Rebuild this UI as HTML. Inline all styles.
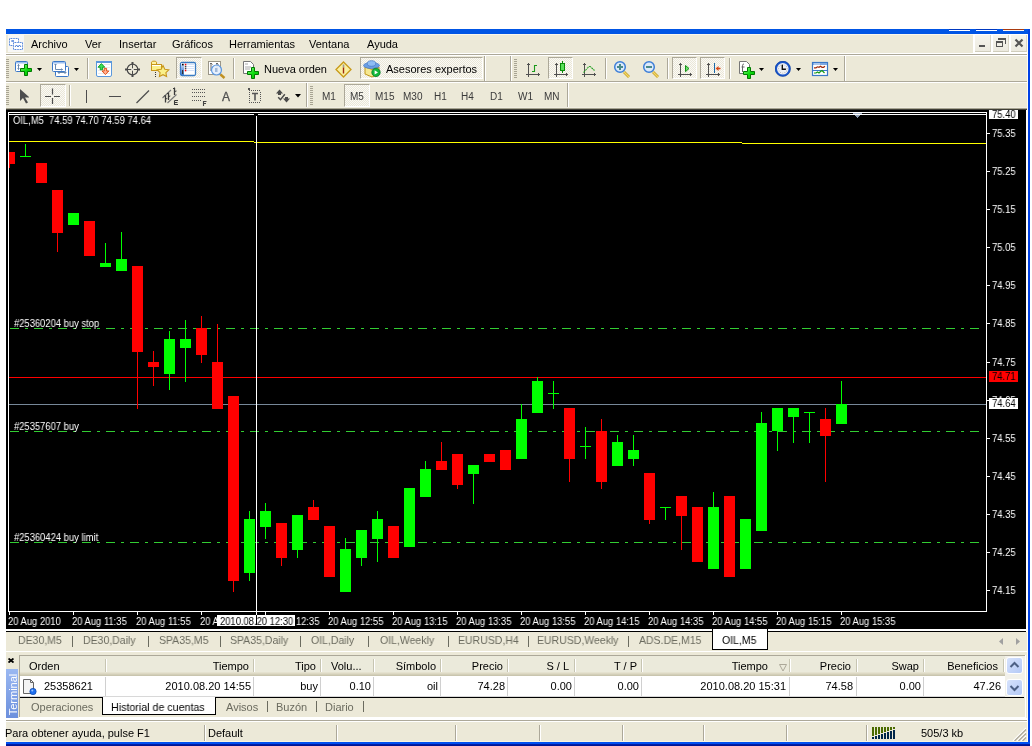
<!DOCTYPE html><html><head><meta charset="utf-8"><style>
html,body{margin:0;padding:0;background:#fff;width:1032px;height:746px;overflow:hidden;position:relative}
body *{position:absolute;box-sizing:border-box}
body{font-family:"Liberation Sans",sans-serif;font-size:11px;color:#000}
span{white-space:pre;line-height:1;will-change:transform}
.ct{color:#fff;font-size:10px;transform:scaleX(0.94);transform-origin:0 0}
</style></head><body>
<div style="left:6px;top:29px;width:1024px;height:5px;background:#0055E5;"></div>
<div style="left:949px;top:29px;width:21px;height:1px;background:#0038C0;"></div>
<div style="left:949px;top:30px;width:21px;height:1px;background:#fff;"></div>
<div style="left:976px;top:29px;width:21px;height:1px;background:#0038C0;"></div>
<div style="left:976px;top:30px;width:21px;height:1px;background:#fff;"></div>
<div style="left:1003px;top:29px;width:21px;height:1px;background:#A83A10;"></div>
<div style="left:1003px;top:30px;width:21px;height:1px;background:#FFF4EC;"></div>
<div style="left:1028px;top:29px;width:2px;height:717px;background:#0041E6;"></div>
<div style="left:1027px;top:34px;width:1px;height:708px;background:#FFFDF4;"></div>
<div style="left:6px;top:742px;width:1024px;height:4px;background:linear-gradient(#0050F0 0,#0050F0 50%,#0020B0 50%,#00128A 100%)"></div>
<div style="left:6px;top:34px;width:1021px;height:19px;background:#ECE9D8;"></div>
<div style="left:6px;top:34px;width:1021px;height:1px;background:#FAF7EC;"></div>
<div style="left:6px;top:53px;width:1021px;height:1px;background:#fff;"></div>
<div style="left:6px;top:54px;width:1021px;height:1px;background:#ACA899;"></div>
<div style="left:6px;top:55px;width:1021px;height:1px;background:#fff;"></div>
<div style="left:6px;top:56px;width:1021px;height:25px;background:#ECE9D8;"></div>
<div style="left:6px;top:81px;width:1021px;height:1px;background:#ACA899;"></div>
<div style="left:6px;top:82px;width:1021px;height:1px;background:#fff;"></div>
<div style="left:6px;top:83px;width:1021px;height:24px;background:#ECE9D8;"></div>
<div style="left:6px;top:107px;width:1021px;height:1px;background:#F1EEE2;"></div>
<div style="left:6px;top:108px;width:1021px;height:1px;background:#A8A592;"></div>
<div style="left:6px;top:109px;width:1021px;height:1px;background:#3E3D36;"></div>
<div style="left:8px;top:35px;width:16px;height:17px;background:#F7F7F5;"></div>
<svg style="left:8px;top:35px" width="16" height="17" viewBox="0 0 16 17"><rect x="1.5" y="3.5" width="9" height="7" fill="#fff" stroke="#4A7FD8" stroke-dasharray="1 0.6"/><rect x="5.5" y="7.5" width="9" height="7" fill="#fff" stroke="#4A7FD8" stroke-dasharray="1 0.6"/><path d="M7 12l1.5-2 1.5 2 1.5-2 1.5 2" stroke="#4A7FD8" fill="none"/><path d="M3 6h3M5 5v2" stroke="#4A7FD8" fill="none"/></svg>
<span style="left:31px;top:39px;">Archivo</span>
<span style="left:85px;top:39px;">Ver</span>
<span style="left:119px;top:39px;">Insertar</span>
<span style="left:172px;top:39px;">Gráficos</span>
<span style="left:229px;top:39px;">Herramientas</span>
<span style="left:309px;top:39px;">Ventana</span>
<span style="left:367px;top:39px;">Ayuda</span>
<div style="left:973px;top:34px;width:54px;height:19px;background:#FFFFFF;"></div>
<div style="left:975px;top:35px;width:16px;height:17px;background:linear-gradient(#F6F5EE,#ECEADF);border-right:1px solid #DAD7C8;border-bottom:1px solid #D0CDBC"></div>
<div style="left:993px;top:35px;width:16px;height:17px;background:linear-gradient(#F6F5EE,#ECEADF);border-right:1px solid #DAD7C8;border-bottom:1px solid #D0CDBC"></div>
<div style="left:1011px;top:35px;width:16px;height:17px;background:linear-gradient(#F6F5EE,#ECEADF);border-right:1px solid #DAD7C8;border-bottom:1px solid #D0CDBC"></div>
<div style="left:979px;top:45px;width:6px;height:2px;background:#555;"></div>
<svg style="left:993px;top:35px" width="16" height="16"><rect x="3.5" y="7.5" width="6" height="4" fill="none" stroke="#555"/><rect x="3" y="6" width="7" height="2" fill="#555"/><path d="M6 3h7v6h-1V4H6z" fill="#555"/><rect x="5" y="3" width="8" height="2" fill="#555"/></svg>
<svg style="left:1011px;top:35px" width="16" height="16"><path d="M4.5 4.5l7 7M11.5 4.5l-7 7" stroke="#555" stroke-width="2.2"/></svg>
<svg style="left:12px;top:57px" width="26" height="24" viewBox="0 0 26 24"><rect x="3.5" y="4.5" width="12" height="10" rx="1" fill="#fff" stroke="#3B78C8"/><rect x="4" y="5" width="11" height="1.5" fill="#9CC0F0"/><path d="M6.5 7.5v5M5.5 8.5l1-1 1 1M5.5 11.5l1 1 1-1" stroke="#6A8AB0" fill="none"/><defs><linearGradient id="pg87" x1="0" y1="0" x2="1" y2="1"><stop offset="0" stop-color="#9CF59C"/><stop offset="0.5" stop-color="#10E010"/><stop offset="1" stop-color="#00B000"/></linearGradient></defs><path d="M12.5 7.5h3v4h4v3h-4v4h-3v-4h-4v-3h4z" fill="url(#pg87)" stroke="#007A00" stroke-width="1"/></svg>
<svg style="left:37px;top:68px" width="5" height="3" viewBox="0 0 5 3"><path d="M0 0h5L2.5 3z" fill="#000"/></svg>
<svg style="left:50px;top:57px" width="24" height="24" viewBox="0 0 24 24"><rect x="5.5" y="9.5" width="13" height="10" rx="1" fill="#fff" stroke="#3B78C8"/><path d="M8 15.5h8M8 15.5l1.5-1.5M8 15.5l1.5 1.5M16 15.5l-1.5-1.5M16 15.5l-1.5 1.5" stroke="#6A8AB0" fill="none"/><rect x="2.5" y="4.5" width="13" height="10" rx="1" fill="#fff" stroke="#3B78C8"/><rect x="3" y="5" width="12" height="1.5" fill="#9CC0F0"/><path d="M5.5 7v5.5h7M4.5 8l1-1 1 1M11.5 11.5l1 1-1 1" stroke="#6A8AB0" fill="none"/></svg>
<svg style="left:74px;top:68px" width="5" height="3" viewBox="0 0 5 3"><path d="M0 0h5L2.5 3z" fill="#000"/></svg>
<div style="left:87px;top:58px;width:1px;height:21px;background:#ACA899;"></div>
<div style="left:88px;top:58px;width:1px;height:21px;background:#fff;"></div>
<svg style="left:95px;top:60px" width="18" height="18" viewBox="0 0 18 18"><rect x="1.5" y="1.5" width="15" height="15" rx="1.5" fill="#fff" stroke="#5A98DC"/><rect x="1" y="1" width="16" height="2" fill="#5A98DC"/><path d="M3 4.5h12M3 7.5h12M3 10.5h12M3 13.5h12" stroke="#EAEAEA"/><path d="M6.4 3.6l3.4 3.6H7.6v2.6H5.2V7.2H3z" fill="#3AE05A" stroke="#0A9A1A" stroke-width="0.9"/><path d="M10.4 14.6l3.4-3.6h-2.2V8.4H9.2V11H7z" fill="#FFB090" stroke="#E0460A" stroke-width="0.9"/></svg>
<svg style="left:124px;top:61px" width="17" height="17" viewBox="0 0 17 17"><circle cx="8.5" cy="8.5" r="5.3" fill="none" stroke="#4A4A4A" stroke-width="1.2"/><path d="M8.5 1v15M1 8.5h15" stroke="#4A4A4A" stroke-width="1"/><path d="M8.5 1v3M8.5 13v3M1 8.5h3M13 8.5h3" stroke="#4A4A4A" stroke-width="2"/><circle cx="8.5" cy="8.5" r="1.2" fill="#F0EEE4"/></svg>
<svg style="left:150px;top:60px" width="20" height="19" viewBox="0 0 20 19"><path d="M1.5 4V2.2l1-1h3l1 1V4" fill="#FFF3A0" stroke="#C8961A"/><rect x="1.5" y="4.5" width="10" height="6" fill="#FBF08A" stroke="#C8961A"/><path d="M2 5.5h9" stroke="#fff"/><path d="M5.5 12v1M5.5 14v1M5.5 16v1" stroke="#333"/><path d="M13 5.6l1.8 3.6 4 .6-2.9 2.8.7 4L13 14.7l-3.6 1.9.7-4-2.9-2.8 4-.6z" fill="#FAF08A" stroke="#C8961A" stroke-width="1.1"/></svg>
<div style="left:176px;top:57px;width:26px;height:22px;border:1px solid;border-color:#ACA899 #fff #fff #ACA899;background-color:#FBFAF6;background-image:linear-gradient(45deg,#EAE7D8 25%,transparent 25%,transparent 75%,#EAE7D8 75%),linear-gradient(45deg,#EAE7D8 25%,transparent 25%,transparent 75%,#EAE7D8 75%);background-size:2px 2px;background-position:0 0,1px 1px"></div>
<svg style="left:179px;top:61px" width="18" height="16" viewBox="0 0 18 16"><defs><linearGradient id="dwg" x1="0" y1="0" x2="0" y2="1"><stop offset="0" stop-color="#E8F0FC"/><stop offset="0.5" stop-color="#7FA8E8"/><stop offset="1" stop-color="#3A78C8"/></linearGradient></defs><rect x="1.5" y="1.5" width="15" height="13" rx="1.5" fill="#fff" stroke="#3A7CC4" stroke-width="1.3"/><rect x="2" y="2" width="3" height="12" fill="url(#dwg)"/><rect x="3" y="2.8" width="1.6" height="1.6" fill="#000"/><rect x="3" y="9" width="1.2" height="4" fill="#333"/><path d="M7 3.5h8M7 5.5h8M7 7.5h8M7 9.5h8" stroke="#D4E2F8"/><rect x="5.8" y="2.8" width="1.5" height="1.5" fill="#F00"/><rect x="5.8" y="4.8" width="1.5" height="1.5" fill="#444"/><rect x="5.8" y="6.8" width="1.5" height="1.5" fill="#444"/><rect x="5.8" y="8.8" width="1.5" height="1.5" fill="#F00"/></svg>
<svg style="left:207px;top:60px" width="20" height="20" viewBox="0 0 20 20"><rect x="1.5" y="1.5" width="12" height="13" fill="#fff" stroke="#9A9688"/><path d="M4 3v8M3 4l1-1M4 3l1.5 1.5M10 3v5M9 4l1-1 1.5 1.5" stroke="#666" fill="none"/><path d="M13.5 14.5l4 3.5" stroke="#C09020" stroke-width="2.4"/><circle cx="9.5" cy="10" r="5" fill="#E4EEFC" fill-opacity="0.9" stroke="#5D98E0" stroke-width="1.2"/><rect x="8" y="8" width="2.5" height="4" fill="#9FB8DA"/></svg>
<div style="left:233px;top:58px;width:1px;height:21px;background:#ACA899;"></div>
<div style="left:234px;top:58px;width:1px;height:21px;background:#fff;"></div>
<svg style="left:242px;top:60px" width="20" height="20" viewBox="0 0 20 20"><path d="M1.5 1.5h7l3 3v9h-10z" fill="#fff" stroke="#777"/><path d="M3 4h3M3 7h6M3 9h5" stroke="#AAA"/><defs><linearGradient id="pg57" x1="0" y1="0" x2="1" y2="1"><stop offset="0" stop-color="#9CF59C"/><stop offset="0.5" stop-color="#10E010"/><stop offset="1" stop-color="#00B000"/></linearGradient></defs><path d="M9.5 7.5h3v4h4v3h-4v4h-3v-4h-4v-3h4z" fill="url(#pg57)" stroke="#007A00" stroke-width="1"/></svg>
<span style="left:264px;top:64px;">Nueva orden</span>
<svg style="left:335px;top:61px" width="18" height="17" viewBox="0 0 18 17"><path d="M8.5 1L16 8.5 8.5 16 1 8.5z" fill="#FAF0A0" stroke="#C89A1A" stroke-width="1.3"/><path d="M8.5 3.5v3" stroke="#9A9A9A" stroke-width="1.6"/><path d="M8.5 6.5v6" stroke="#A02A10" stroke-width="1.4"/></svg>
<div style="left:360px;top:57px;width:123px;height:22px;border:1px solid;border-color:#ACA899 #fff #fff #ACA899;background-color:#FBFAF6;background-image:linear-gradient(45deg,#EAE7D8 25%,transparent 25%,transparent 75%,#EAE7D8 75%),linear-gradient(45deg,#EAE7D8 25%,transparent 25%,transparent 75%,#EAE7D8 75%);background-size:2px 2px;background-position:0 0,1px 1px"></div>
<svg style="left:362px;top:59px" width="20" height="20" viewBox="0 0 20 20"><path d="M3 8l7 2.5 7-2.5v7l-7 3-7-3z" fill="#F6E890" stroke="#C0961A"/><ellipse cx="9.5" cy="6.5" rx="8" ry="3" fill="#6A9EE4" stroke="#4A7EC8" stroke-width="0.8"/><ellipse cx="9.5" cy="4.5" rx="4.2" ry="2.8" fill="#8EBCF4" stroke="#4A7EC8" stroke-width="0.8"/><circle cx="14" cy="13.4" r="4.2" fill="#12B83A" stroke="#0A7A2A" stroke-width="0.8"/><path d="M12.6 11.2v4.4l3.4-2.2z" fill="#fff"/></svg>
<span style="left:386px;top:64px;">Asesores expertos</span>
<div style="left:484px;top:56px;width:1px;height:25px;background:#ACA899;"></div>
<div style="left:485px;top:56px;width:1px;height:25px;background:#fff;"></div>
<div style="left:510px;top:56px;width:1px;height:25px;background:#ACA899;"></div>
<div style="left:511px;top:56px;width:1px;height:25px;background:#fff;"></div>
<div style="left:514px;top:59px;width:3px;height:1px;background:#A8A493;"></div>
<div style="left:514px;top:61px;width:3px;height:1px;background:#A8A493;"></div>
<div style="left:514px;top:63px;width:3px;height:1px;background:#A8A493;"></div>
<div style="left:514px;top:65px;width:3px;height:1px;background:#A8A493;"></div>
<div style="left:514px;top:67px;width:3px;height:1px;background:#A8A493;"></div>
<div style="left:514px;top:69px;width:3px;height:1px;background:#A8A493;"></div>
<div style="left:514px;top:71px;width:3px;height:1px;background:#A8A493;"></div>
<div style="left:514px;top:73px;width:3px;height:1px;background:#A8A493;"></div>
<div style="left:514px;top:75px;width:3px;height:1px;background:#A8A493;"></div>
<div style="left:514px;top:77px;width:3px;height:1px;background:#A8A493;"></div>
<div style="left:528px;top:63px;width:1px;height:14px;background:#505050;"></div>
<div style="left:526px;top:74px;width:14px;height:1px;background:#505050;"></div>
<div style="left:527px;top:64px;width:1px;height:1px;background:#505050;"></div>
<div style="left:529px;top:64px;width:1px;height:1px;background:#505050;"></div>
<div style="left:538px;top:73px;width:1px;height:1px;background:#505050;"></div>
<div style="left:538px;top:75px;width:1px;height:1px;background:#505050;"></div>
<svg style="left:524px;top:61px" width="18" height="17" viewBox="0 0 18 17"><path d="M8 10.5h2.5V4.5H13" stroke="#1A9A1A" stroke-width="1.1" fill="none"/></svg>
<div style="left:548px;top:57px;width:25px;height:22px;border:1px solid;border-color:#ACA899 #fff #fff #ACA899;background-color:#FBFAF6;background-image:linear-gradient(45deg,#EAE7D8 25%,transparent 25%,transparent 75%,#EAE7D8 75%),linear-gradient(45deg,#EAE7D8 25%,transparent 25%,transparent 75%,#EAE7D8 75%);background-size:2px 2px;background-position:0 0,1px 1px"></div>
<div style="left:556px;top:63px;width:1px;height:14px;background:#505050;"></div>
<div style="left:554px;top:74px;width:14px;height:1px;background:#505050;"></div>
<div style="left:555px;top:64px;width:1px;height:1px;background:#505050;"></div>
<div style="left:557px;top:64px;width:1px;height:1px;background:#505050;"></div>
<div style="left:566px;top:73px;width:1px;height:1px;background:#505050;"></div>
<div style="left:566px;top:75px;width:1px;height:1px;background:#505050;"></div>
<svg style="left:553px;top:61px" width="18" height="17" viewBox="0 0 18 17"><path d="M9.5 0v12" stroke="#0A8A0A"/><rect x="7.5" y="2.5" width="4" height="7" fill="#5AE05A" stroke="#0A8A0A"/></svg>
<div style="left:584px;top:63px;width:1px;height:14px;background:#505050;"></div>
<div style="left:582px;top:74px;width:14px;height:1px;background:#505050;"></div>
<div style="left:583px;top:64px;width:1px;height:1px;background:#505050;"></div>
<div style="left:585px;top:64px;width:1px;height:1px;background:#505050;"></div>
<div style="left:594px;top:73px;width:1px;height:1px;background:#505050;"></div>
<div style="left:594px;top:75px;width:1px;height:1px;background:#505050;"></div>
<svg style="left:580px;top:61px" width="18" height="17" viewBox="0 0 18 17"><path d="M3.5 11.5L8 6.5Q9 5 10.5 5.8L14.5 9.5" stroke="#22A022" stroke-width="1.1" fill="none" stroke-dasharray="2 0.7"/></svg>
<div style="left:605px;top:58px;width:1px;height:21px;background:#ACA899;"></div>
<div style="left:606px;top:58px;width:1px;height:21px;background:#fff;"></div>
<svg style="left:612px;top:60px" width="19" height="19" viewBox="0 0 19 19"><path d="M12 12l5 5" stroke="#C9A020" stroke-width="2.8"/><path d="M12 12l5 5" stroke="#F0D86A" stroke-width="1.2"/><circle cx="8" cy="7" r="5.3" fill="#DCEAFA" stroke="#3C7ED8" stroke-width="1.5"/><path d="M5 7h6" stroke="#4A8A8A" stroke-width="2"/><path d="M8 4v6" stroke="#4A8A8A" stroke-width="2"/></svg>
<svg style="left:641px;top:60px" width="19" height="19" viewBox="0 0 19 19"><path d="M12 12l5 5" stroke="#C9A020" stroke-width="2.8"/><path d="M12 12l5 5" stroke="#F0D86A" stroke-width="1.2"/><circle cx="8" cy="7" r="5.3" fill="#DCEAFA" stroke="#3C7ED8" stroke-width="1.5"/><path d="M5 7h6" stroke="#4A8A8A" stroke-width="2"/></svg>
<div style="left:667px;top:58px;width:1px;height:21px;background:#ACA899;"></div>
<div style="left:668px;top:58px;width:1px;height:21px;background:#fff;"></div>
<div style="left:672px;top:57px;width:25px;height:22px;border:1px solid;border-color:#ACA899 #fff #fff #ACA899;background-color:#FBFAF6;background-image:linear-gradient(45deg,#EAE7D8 25%,transparent 25%,transparent 75%,#EAE7D8 75%),linear-gradient(45deg,#EAE7D8 25%,transparent 25%,transparent 75%,#EAE7D8 75%);background-size:2px 2px;background-position:0 0,1px 1px"></div>
<div style="left:680px;top:63px;width:1px;height:14px;background:#505050;"></div>
<div style="left:678px;top:74px;width:14px;height:1px;background:#505050;"></div>
<div style="left:679px;top:64px;width:1px;height:1px;background:#505050;"></div>
<div style="left:681px;top:64px;width:1px;height:1px;background:#505050;"></div>
<div style="left:690px;top:73px;width:1px;height:1px;background:#505050;"></div>
<div style="left:690px;top:75px;width:1px;height:1px;background:#505050;"></div>
<svg style="left:676px;top:61px" width="18" height="17" viewBox="0 0 18 17"><path d="M9.5 4.5l3.5 3-3.5 3.2z" fill="#6AE06A" stroke="#159015"/></svg>
<div style="left:700px;top:57px;width:25px;height:22px;border:1px solid;border-color:#ACA899 #fff #fff #ACA899;background-color:#FBFAF6;background-image:linear-gradient(45deg,#EAE7D8 25%,transparent 25%,transparent 75%,#EAE7D8 75%),linear-gradient(45deg,#EAE7D8 25%,transparent 25%,transparent 75%,#EAE7D8 75%);background-size:2px 2px;background-position:0 0,1px 1px"></div>
<div style="left:708px;top:63px;width:1px;height:14px;background:#505050;"></div>
<div style="left:706px;top:74px;width:14px;height:1px;background:#505050;"></div>
<div style="left:707px;top:64px;width:1px;height:1px;background:#505050;"></div>
<div style="left:709px;top:64px;width:1px;height:1px;background:#505050;"></div>
<div style="left:718px;top:73px;width:1px;height:1px;background:#505050;"></div>
<div style="left:718px;top:75px;width:1px;height:1px;background:#505050;"></div>
<div style="left:714px;top:63px;width:1px;height:10px;background:#1A68A8;"></div>
<svg style="left:704px;top:61px" width="18" height="17" viewBox="0 0 18 17"><path d="M11.5 7.5l3-2.5v1.8h2v1.4h-2V10z" fill="#D84A1A"/></svg>
<div style="left:729px;top:58px;width:1px;height:21px;background:#ACA899;"></div>
<div style="left:730px;top:58px;width:1px;height:21px;background:#fff;"></div>
<svg style="left:738px;top:60px" width="20" height="20" viewBox="0 0 20 20"><path d="M1.5 1.5h7l3 3v9h-10z" fill="#fff" stroke="#777"/><path d="M6 4c-1.5 0-1.5 1-1.5 3v5M3.5 7h3" stroke="#666" fill="none"/><defs><linearGradient id="pg57" x1="0" y1="0" x2="1" y2="1"><stop offset="0" stop-color="#9CF59C"/><stop offset="0.5" stop-color="#10E010"/><stop offset="1" stop-color="#00B000"/></linearGradient></defs><path d="M9.5 7.5h3v4h4v3h-4v4h-3v-4h-4v-3h4z" fill="url(#pg57)" stroke="#007A00" stroke-width="1"/></svg>
<svg style="left:759px;top:68px" width="5" height="3" viewBox="0 0 5 3"><path d="M0 0h5L2.5 3z" fill="#000"/></svg>
<svg style="left:775px;top:61px" width="16" height="16" viewBox="0 0 16 16"><circle cx="7.8" cy="7.8" r="6.8" fill="#EEF0F4" stroke="#1A56CC" stroke-width="2"/><circle cx="7.8" cy="7.8" r="7.6" fill="none" stroke="#0A3A9A" stroke-width="0.6"/><circle cx="12.10" cy="7.80" r="0.45" fill="#8A8A8A"/><circle cx="11.52" cy="9.95" r="0.45" fill="#8A8A8A"/><circle cx="9.95" cy="11.52" r="0.45" fill="#8A8A8A"/><circle cx="7.80" cy="12.10" r="0.45" fill="#8A8A8A"/><circle cx="5.65" cy="11.52" r="0.45" fill="#8A8A8A"/><circle cx="4.08" cy="9.95" r="0.45" fill="#8A8A8A"/><circle cx="3.50" cy="7.80" r="0.45" fill="#8A8A8A"/><circle cx="4.08" cy="5.65" r="0.45" fill="#8A8A8A"/><circle cx="5.65" cy="4.08" r="0.45" fill="#8A8A8A"/><circle cx="7.80" cy="3.50" r="0.45" fill="#8A8A8A"/><circle cx="9.95" cy="4.08" r="0.45" fill="#8A8A8A"/><circle cx="11.52" cy="5.65" r="0.45" fill="#8A8A8A"/><path d="M7.3 3.8v4.5h3.6" stroke="#111" stroke-width="1.4" fill="none"/></svg>
<svg style="left:796px;top:68px" width="5" height="3" viewBox="0 0 5 3"><path d="M0 0h5L2.5 3z" fill="#000"/></svg>
<svg style="left:811px;top:61px" width="18" height="16" viewBox="0 0 18 16"><rect x="1.5" y="1.5" width="15" height="13" fill="#fff" stroke="#3A78C8" stroke-width="1.2"/><rect x="2" y="2" width="14" height="2" fill="#7FA8E0"/><rect x="3" y="2.5" width="6" height="1" fill="#D8E6FA"/><path d="M2 9.5h14" stroke="#3A78C8"/><path d="M3 6.8h2l1.5-1 1.5.5 1.5-1 1.5 1h1.5l1.5-1" stroke="#A0280A" stroke-width="1.2" fill="none"/><path d="M3 12h2l1.5-1 1.5 1 1.5-1.5 1.5-1 1.5 1.5 1 1" stroke="#159A15" stroke-width="1.2" fill="none"/></svg>
<svg style="left:833px;top:68px" width="5" height="3" viewBox="0 0 5 3"><path d="M0 0h5L2.5 3z" fill="#000"/></svg>
<div style="left:844px;top:56px;width:1px;height:25px;background:#ACA899;"></div>
<div style="left:845px;top:56px;width:1px;height:25px;background:#fff;"></div>
<svg style="left:19px;top:88px" width="10" height="16" viewBox="0 0 10 16"><path d="M1 1v12l3-3 3 5.5 2-1-3-5h4.5z" fill="#4D4D4D"/></svg>
<div style="left:40px;top:84px;width:26px;height:23px;border:1px solid;border-color:#ACA899 #fff #fff #ACA899;background-color:#FBFAF6;background-image:linear-gradient(45deg,#EAE7D8 25%,transparent 25%,transparent 75%,#EAE7D8 75%),linear-gradient(45deg,#EAE7D8 25%,transparent 25%,transparent 75%,#EAE7D8 75%);background-size:2px 2px;background-position:0 0,1px 1px"></div>
<svg style="left:44px;top:88px" width="17" height="17" viewBox="0 0 17 17"><path d="M8.5 0.5v6M8.5 10v6M1 8.5h6M10 8.5h6" stroke="#4D4D4D" stroke-width="1.2"/></svg>
<div style="left:69px;top:85px;width:1px;height:21px;background:#ACA899;"></div>
<div style="left:70px;top:85px;width:1px;height:21px;background:#fff;"></div>
<div style="left:86px;top:90px;width:1px;height:13px;background:#4D4D4D;"></div>
<div style="left:109px;top:96px;width:12px;height:1px;background:#4D4D4D;"></div>
<div style="left:109px;top:97px;width:12px;height:0px;background:#4D4D4D;"></div>
<svg style="left:135px;top:89px" width="16" height="16" viewBox="0 0 16 16"><path d="M1.5 14L14 1.5" stroke="#4D4D4D" stroke-width="1.2"/></svg>
<svg style="left:160px;top:84px" width="22" height="22" viewBox="0 0 22 22"><path d="M2.5 14L11 6M7.5 19L16.5 10.5" stroke="#777" stroke-width="1.1"/><path d="M5.5 11.5v7M8.5 9v7M14.5 4v7" stroke="#3A3A3A" stroke-width="1.3" fill="none"/><path d="M4 12.5l1.5-1.5M7 10l1.5-1.5M13 5l1.5-1.5M14.5 7.5l2 -0.5M8.5 12.5l1.8-0.5M5.5 15l1.8-0.5" stroke="#3A3A3A" stroke-width="1" fill="none"/><path d="M14.5 16.5v4h3.5M14.5 16.5h3.5M14.5 18.5h3" stroke="#3A3A3A" stroke-width="1.1" fill="none"/></svg>
<svg style="left:191px;top:88px" width="17" height="18" viewBox="0 0 17 18"><path d="M1 1.5h13M1 4.5h13M1 8.5h13M1 12.5h9" stroke="#555" stroke-dasharray="1 1"/><path d="M12.5 13v5M12.5 13.5h3M12.5 15.5h2.5" stroke="#444" stroke-width="1.1" fill="none"/></svg>
<span style="left:222px;top:91px;font-size:12px;color:#505050;-webkit-text-stroke:0.3px #505050">A</span>
<svg style="left:248px;top:88px" width="14" height="16" viewBox="0 0 14 16"><g fill="#555"><rect x="1" y="2" width="1" height="1"/><rect x="1" y="14" width="1" height="1"/><rect x="3" y="2" width="1" height="1"/><rect x="3" y="14" width="1" height="1"/><rect x="5" y="2" width="1" height="1"/><rect x="5" y="14" width="1" height="1"/><rect x="7" y="2" width="1" height="1"/><rect x="7" y="14" width="1" height="1"/><rect x="9" y="2" width="1" height="1"/><rect x="9" y="14" width="1" height="1"/><rect x="11" y="2" width="1" height="1"/><rect x="11" y="14" width="1" height="1"/><rect x="1" y="4" width="1" height="1"/><rect x="12" y="4" width="1" height="1"/><rect x="1" y="6" width="1" height="1"/><rect x="12" y="6" width="1" height="1"/><rect x="1" y="8" width="1" height="1"/><rect x="12" y="8" width="1" height="1"/><rect x="1" y="10" width="1" height="1"/><rect x="12" y="10" width="1" height="1"/><rect x="1" y="12" width="1" height="1"/><rect x="12" y="12" width="1" height="1"/><rect x="0" y="0" width="2" height="2"/></g><path d="M4 5.5h6M7 5.5v7" stroke="#555" stroke-width="1.6"/></svg>
<svg style="left:272px;top:86px" width="22" height="20" viewBox="0 0 22 20"><path d="M7.5 3.5L11 7.5H9v1.5H6V7.5H4z" fill="#4A4A4A"/><path d="M6.2 11.3l2.3 2.4 4.3-5.5" stroke="#4A4A4A" stroke-width="1.5" fill="none"/><path d="M14.5 16.5L18 12.5h-2V11h-3v1.5h-2z" fill="#4A4A4A"/></svg>
<svg style="left:295px;top:94px" width="6" height="4" viewBox="0 0 6 4"><path d="M0 0h6L3 3.5z" fill="#000"/></svg>
<div style="left:306px;top:83px;width:1px;height:24px;background:#ACA899;"></div>
<div style="left:307px;top:83px;width:1px;height:24px;background:#fff;"></div>
<div style="left:310px;top:86px;width:3px;height:1px;background:#A8A493;"></div>
<div style="left:310px;top:88px;width:3px;height:1px;background:#A8A493;"></div>
<div style="left:310px;top:90px;width:3px;height:1px;background:#A8A493;"></div>
<div style="left:310px;top:92px;width:3px;height:1px;background:#A8A493;"></div>
<div style="left:310px;top:94px;width:3px;height:1px;background:#A8A493;"></div>
<div style="left:310px;top:96px;width:3px;height:1px;background:#A8A493;"></div>
<div style="left:310px;top:98px;width:3px;height:1px;background:#A8A493;"></div>
<div style="left:310px;top:100px;width:3px;height:1px;background:#A8A493;"></div>
<div style="left:310px;top:102px;width:3px;height:1px;background:#A8A493;"></div>
<div style="left:310px;top:104px;width:3px;height:1px;background:#A8A493;"></div>
<div style="left:344px;top:84px;width:26px;height:23px;border:1px solid;border-color:#ACA899 #fff #fff #ACA899;background-color:#FBFAF6;background-image:linear-gradient(45deg,#EAE7D8 25%,transparent 25%,transparent 75%,#EAE7D8 75%),linear-gradient(45deg,#EAE7D8 25%,transparent 25%,transparent 75%,#EAE7D8 75%);background-size:2px 2px;background-position:0 0,1px 1px"></div>
<span style="left:322px;top:92px;font-size:10px;color:#3A3A3A">M1</span>
<span style="left:350px;top:92px;font-size:10px;color:#3A3A3A">M5</span>
<span style="left:375px;top:92px;font-size:10px;color:#3A3A3A">M15</span>
<span style="left:403px;top:92px;font-size:10px;color:#3A3A3A">M30</span>
<span style="left:434px;top:92px;font-size:10px;color:#3A3A3A">H1</span>
<span style="left:461px;top:92px;font-size:10px;color:#3A3A3A">H4</span>
<span style="left:490px;top:92px;font-size:10px;color:#3A3A3A">D1</span>
<span style="left:518px;top:92px;font-size:10px;color:#3A3A3A">W1</span>
<span style="left:544px;top:92px;font-size:10px;color:#3A3A3A">MN</span>
<div style="left:567px;top:83px;width:1px;height:24px;background:#ACA899;"></div>
<div style="left:568px;top:83px;width:1px;height:24px;background:#fff;"></div>
<div style="left:6px;top:59px;width:3px;height:1px;background:#A8A493;"></div>
<div style="left:6px;top:61px;width:3px;height:1px;background:#A8A493;"></div>
<div style="left:6px;top:63px;width:3px;height:1px;background:#A8A493;"></div>
<div style="left:6px;top:65px;width:3px;height:1px;background:#A8A493;"></div>
<div style="left:6px;top:67px;width:3px;height:1px;background:#A8A493;"></div>
<div style="left:6px;top:69px;width:3px;height:1px;background:#A8A493;"></div>
<div style="left:6px;top:71px;width:3px;height:1px;background:#A8A493;"></div>
<div style="left:6px;top:73px;width:3px;height:1px;background:#A8A493;"></div>
<div style="left:6px;top:75px;width:3px;height:1px;background:#A8A493;"></div>
<div style="left:6px;top:77px;width:3px;height:1px;background:#A8A493;"></div>
<div style="left:6px;top:86px;width:3px;height:1px;background:#A8A493;"></div>
<div style="left:6px;top:88px;width:3px;height:1px;background:#A8A493;"></div>
<div style="left:6px;top:90px;width:3px;height:1px;background:#A8A493;"></div>
<div style="left:6px;top:92px;width:3px;height:1px;background:#A8A493;"></div>
<div style="left:6px;top:94px;width:3px;height:1px;background:#A8A493;"></div>
<div style="left:6px;top:96px;width:3px;height:1px;background:#A8A493;"></div>
<div style="left:6px;top:98px;width:3px;height:1px;background:#A8A493;"></div>
<div style="left:6px;top:100px;width:3px;height:1px;background:#A8A493;"></div>
<div style="left:6px;top:102px;width:3px;height:1px;background:#A8A493;"></div>
<div style="left:6px;top:104px;width:3px;height:1px;background:#A8A493;"></div>
<div style="left:6px;top:110px;width:1020px;height:519px;background:#000;"></div>
<div style="left:8px;top:112px;width:979px;height:1px;background:#fff;"></div>
<div style="left:8px;top:112px;width:1px;height:500px;background:#fff;"></div>
<div style="left:986px;top:112px;width:1px;height:500px;background:#fff;"></div>
<div style="left:8px;top:611px;width:979px;height:1px;background:#fff;"></div>
<div style="left:9px;top:114px;width:245px;height:1px;background:#fff;"></div>
<div style="left:258px;top:114px;width:728px;height:1px;background:#fff;"></div>
<div style="left:853px;top:113px;width:9px;height:1px;background:#A4B2C6;"></div>
<div style="left:855px;top:115px;width:5px;height:1px;background:#94A4B8;"></div>
<div style="left:856px;top:116px;width:3px;height:1px;background:#8A9AB0;"></div>
<div style="left:857px;top:117px;width:1px;height:1px;background:#8A9AB0;"></div>
<div style="left:9px;top:141px;width:245px;height:1px;background:#FFFF00;"></div>
<div style="left:254px;top:142px;width:488px;height:1px;background:#FFFF00;"></div>
<div style="left:742px;top:143px;width:244px;height:1px;background:#FFFF00;"></div>
<div style="left:987px;top:133px;width:3px;height:1px;background:#fff;"></div>
<span style="left:992px;top:129px;color:#fff;font-size:10px;transform:scaleX(0.94);transform-origin:0 0">75.35</span>
<div style="left:987px;top:171px;width:3px;height:1px;background:#fff;"></div>
<span style="left:992px;top:167px;color:#fff;font-size:10px;transform:scaleX(0.94);transform-origin:0 0">75.25</span>
<div style="left:987px;top:209px;width:3px;height:1px;background:#fff;"></div>
<span style="left:992px;top:205px;color:#fff;font-size:10px;transform:scaleX(0.94);transform-origin:0 0">75.15</span>
<div style="left:987px;top:247px;width:3px;height:1px;background:#fff;"></div>
<span style="left:992px;top:243px;color:#fff;font-size:10px;transform:scaleX(0.94);transform-origin:0 0">75.05</span>
<div style="left:987px;top:285px;width:3px;height:1px;background:#fff;"></div>
<span style="left:992px;top:281px;color:#fff;font-size:10px;transform:scaleX(0.94);transform-origin:0 0">74.95</span>
<div style="left:987px;top:323px;width:3px;height:1px;background:#fff;"></div>
<span style="left:992px;top:319px;color:#fff;font-size:10px;transform:scaleX(0.94);transform-origin:0 0">74.85</span>
<div style="left:987px;top:362px;width:3px;height:1px;background:#fff;"></div>
<span style="left:992px;top:358px;color:#fff;font-size:10px;transform:scaleX(0.94);transform-origin:0 0">74.75</span>
<div style="left:987px;top:400px;width:3px;height:1px;background:#fff;"></div>
<span style="left:992px;top:396px;color:#fff;font-size:10px;transform:scaleX(0.94);transform-origin:0 0">74.65</span>
<div style="left:987px;top:438px;width:3px;height:1px;background:#fff;"></div>
<span style="left:992px;top:434px;color:#fff;font-size:10px;transform:scaleX(0.94);transform-origin:0 0">74.55</span>
<div style="left:987px;top:476px;width:3px;height:1px;background:#fff;"></div>
<span style="left:992px;top:472px;color:#fff;font-size:10px;transform:scaleX(0.94);transform-origin:0 0">74.45</span>
<div style="left:987px;top:514px;width:3px;height:1px;background:#fff;"></div>
<span style="left:992px;top:510px;color:#fff;font-size:10px;transform:scaleX(0.94);transform-origin:0 0">74.35</span>
<div style="left:987px;top:552px;width:3px;height:1px;background:#fff;"></div>
<span style="left:992px;top:548px;color:#fff;font-size:10px;transform:scaleX(0.94);transform-origin:0 0">74.25</span>
<div style="left:987px;top:590px;width:3px;height:1px;background:#fff;"></div>
<span style="left:992px;top:586px;color:#fff;font-size:10px;transform:scaleX(0.94);transform-origin:0 0">74.15</span>
<div style="left:10px;top:328px;width:9px;height:1px;background:#32CD32;"></div>
<div style="left:25px;top:328px;width:3px;height:1px;background:#32CD32;"></div>
<div style="left:34px;top:328px;width:9px;height:1px;background:#32CD32;"></div>
<div style="left:49px;top:328px;width:3px;height:1px;background:#32CD32;"></div>
<div style="left:58px;top:328px;width:9px;height:1px;background:#32CD32;"></div>
<div style="left:73px;top:328px;width:3px;height:1px;background:#32CD32;"></div>
<div style="left:82px;top:328px;width:9px;height:1px;background:#32CD32;"></div>
<div style="left:97px;top:328px;width:3px;height:1px;background:#32CD32;"></div>
<div style="left:106px;top:328px;width:9px;height:1px;background:#32CD32;"></div>
<div style="left:121px;top:328px;width:3px;height:1px;background:#32CD32;"></div>
<div style="left:130px;top:328px;width:9px;height:1px;background:#32CD32;"></div>
<div style="left:145px;top:328px;width:3px;height:1px;background:#32CD32;"></div>
<div style="left:154px;top:328px;width:9px;height:1px;background:#32CD32;"></div>
<div style="left:169px;top:328px;width:3px;height:1px;background:#32CD32;"></div>
<div style="left:178px;top:328px;width:9px;height:1px;background:#32CD32;"></div>
<div style="left:193px;top:328px;width:3px;height:1px;background:#32CD32;"></div>
<div style="left:202px;top:328px;width:9px;height:1px;background:#32CD32;"></div>
<div style="left:217px;top:328px;width:3px;height:1px;background:#32CD32;"></div>
<div style="left:226px;top:328px;width:9px;height:1px;background:#32CD32;"></div>
<div style="left:241px;top:328px;width:3px;height:1px;background:#32CD32;"></div>
<div style="left:250px;top:328px;width:9px;height:1px;background:#32CD32;"></div>
<div style="left:265px;top:328px;width:3px;height:1px;background:#32CD32;"></div>
<div style="left:274px;top:328px;width:9px;height:1px;background:#32CD32;"></div>
<div style="left:289px;top:328px;width:3px;height:1px;background:#32CD32;"></div>
<div style="left:298px;top:328px;width:9px;height:1px;background:#32CD32;"></div>
<div style="left:313px;top:328px;width:3px;height:1px;background:#32CD32;"></div>
<div style="left:322px;top:328px;width:9px;height:1px;background:#32CD32;"></div>
<div style="left:337px;top:328px;width:3px;height:1px;background:#32CD32;"></div>
<div style="left:346px;top:328px;width:9px;height:1px;background:#32CD32;"></div>
<div style="left:361px;top:328px;width:3px;height:1px;background:#32CD32;"></div>
<div style="left:370px;top:328px;width:9px;height:1px;background:#32CD32;"></div>
<div style="left:385px;top:328px;width:3px;height:1px;background:#32CD32;"></div>
<div style="left:394px;top:328px;width:9px;height:1px;background:#32CD32;"></div>
<div style="left:409px;top:328px;width:3px;height:1px;background:#32CD32;"></div>
<div style="left:418px;top:328px;width:9px;height:1px;background:#32CD32;"></div>
<div style="left:433px;top:328px;width:3px;height:1px;background:#32CD32;"></div>
<div style="left:442px;top:328px;width:9px;height:1px;background:#32CD32;"></div>
<div style="left:457px;top:328px;width:3px;height:1px;background:#32CD32;"></div>
<div style="left:466px;top:328px;width:9px;height:1px;background:#32CD32;"></div>
<div style="left:481px;top:328px;width:3px;height:1px;background:#32CD32;"></div>
<div style="left:490px;top:328px;width:9px;height:1px;background:#32CD32;"></div>
<div style="left:505px;top:328px;width:3px;height:1px;background:#32CD32;"></div>
<div style="left:514px;top:328px;width:9px;height:1px;background:#32CD32;"></div>
<div style="left:529px;top:328px;width:3px;height:1px;background:#32CD32;"></div>
<div style="left:538px;top:328px;width:9px;height:1px;background:#32CD32;"></div>
<div style="left:553px;top:328px;width:3px;height:1px;background:#32CD32;"></div>
<div style="left:562px;top:328px;width:9px;height:1px;background:#32CD32;"></div>
<div style="left:577px;top:328px;width:3px;height:1px;background:#32CD32;"></div>
<div style="left:586px;top:328px;width:9px;height:1px;background:#32CD32;"></div>
<div style="left:601px;top:328px;width:3px;height:1px;background:#32CD32;"></div>
<div style="left:610px;top:328px;width:9px;height:1px;background:#32CD32;"></div>
<div style="left:625px;top:328px;width:3px;height:1px;background:#32CD32;"></div>
<div style="left:634px;top:328px;width:9px;height:1px;background:#32CD32;"></div>
<div style="left:649px;top:328px;width:3px;height:1px;background:#32CD32;"></div>
<div style="left:658px;top:328px;width:9px;height:1px;background:#32CD32;"></div>
<div style="left:673px;top:328px;width:3px;height:1px;background:#32CD32;"></div>
<div style="left:682px;top:328px;width:9px;height:1px;background:#32CD32;"></div>
<div style="left:697px;top:328px;width:3px;height:1px;background:#32CD32;"></div>
<div style="left:706px;top:328px;width:9px;height:1px;background:#32CD32;"></div>
<div style="left:721px;top:328px;width:3px;height:1px;background:#32CD32;"></div>
<div style="left:730px;top:328px;width:9px;height:1px;background:#32CD32;"></div>
<div style="left:745px;top:328px;width:3px;height:1px;background:#32CD32;"></div>
<div style="left:754px;top:328px;width:9px;height:1px;background:#32CD32;"></div>
<div style="left:769px;top:328px;width:3px;height:1px;background:#32CD32;"></div>
<div style="left:778px;top:328px;width:9px;height:1px;background:#32CD32;"></div>
<div style="left:793px;top:328px;width:3px;height:1px;background:#32CD32;"></div>
<div style="left:802px;top:328px;width:9px;height:1px;background:#32CD32;"></div>
<div style="left:817px;top:328px;width:3px;height:1px;background:#32CD32;"></div>
<div style="left:826px;top:328px;width:9px;height:1px;background:#32CD32;"></div>
<div style="left:841px;top:328px;width:3px;height:1px;background:#32CD32;"></div>
<div style="left:850px;top:328px;width:9px;height:1px;background:#32CD32;"></div>
<div style="left:865px;top:328px;width:3px;height:1px;background:#32CD32;"></div>
<div style="left:874px;top:328px;width:9px;height:1px;background:#32CD32;"></div>
<div style="left:889px;top:328px;width:3px;height:1px;background:#32CD32;"></div>
<div style="left:898px;top:328px;width:9px;height:1px;background:#32CD32;"></div>
<div style="left:913px;top:328px;width:3px;height:1px;background:#32CD32;"></div>
<div style="left:922px;top:328px;width:9px;height:1px;background:#32CD32;"></div>
<div style="left:937px;top:328px;width:3px;height:1px;background:#32CD32;"></div>
<div style="left:946px;top:328px;width:9px;height:1px;background:#32CD32;"></div>
<div style="left:961px;top:328px;width:3px;height:1px;background:#32CD32;"></div>
<div style="left:970px;top:328px;width:9px;height:1px;background:#32CD32;"></div>
<div style="left:10px;top:431px;width:9px;height:1px;background:#32CD32;"></div>
<div style="left:25px;top:431px;width:3px;height:1px;background:#32CD32;"></div>
<div style="left:34px;top:431px;width:9px;height:1px;background:#32CD32;"></div>
<div style="left:49px;top:431px;width:3px;height:1px;background:#32CD32;"></div>
<div style="left:58px;top:431px;width:9px;height:1px;background:#32CD32;"></div>
<div style="left:73px;top:431px;width:3px;height:1px;background:#32CD32;"></div>
<div style="left:82px;top:431px;width:9px;height:1px;background:#32CD32;"></div>
<div style="left:97px;top:431px;width:3px;height:1px;background:#32CD32;"></div>
<div style="left:106px;top:431px;width:9px;height:1px;background:#32CD32;"></div>
<div style="left:121px;top:431px;width:3px;height:1px;background:#32CD32;"></div>
<div style="left:130px;top:431px;width:9px;height:1px;background:#32CD32;"></div>
<div style="left:145px;top:431px;width:3px;height:1px;background:#32CD32;"></div>
<div style="left:154px;top:431px;width:9px;height:1px;background:#32CD32;"></div>
<div style="left:169px;top:431px;width:3px;height:1px;background:#32CD32;"></div>
<div style="left:178px;top:431px;width:9px;height:1px;background:#32CD32;"></div>
<div style="left:193px;top:431px;width:3px;height:1px;background:#32CD32;"></div>
<div style="left:202px;top:431px;width:9px;height:1px;background:#32CD32;"></div>
<div style="left:217px;top:431px;width:3px;height:1px;background:#32CD32;"></div>
<div style="left:226px;top:431px;width:9px;height:1px;background:#32CD32;"></div>
<div style="left:241px;top:431px;width:3px;height:1px;background:#32CD32;"></div>
<div style="left:250px;top:431px;width:9px;height:1px;background:#32CD32;"></div>
<div style="left:265px;top:431px;width:3px;height:1px;background:#32CD32;"></div>
<div style="left:274px;top:431px;width:9px;height:1px;background:#32CD32;"></div>
<div style="left:289px;top:431px;width:3px;height:1px;background:#32CD32;"></div>
<div style="left:298px;top:431px;width:9px;height:1px;background:#32CD32;"></div>
<div style="left:313px;top:431px;width:3px;height:1px;background:#32CD32;"></div>
<div style="left:322px;top:431px;width:9px;height:1px;background:#32CD32;"></div>
<div style="left:337px;top:431px;width:3px;height:1px;background:#32CD32;"></div>
<div style="left:346px;top:431px;width:9px;height:1px;background:#32CD32;"></div>
<div style="left:361px;top:431px;width:3px;height:1px;background:#32CD32;"></div>
<div style="left:370px;top:431px;width:9px;height:1px;background:#32CD32;"></div>
<div style="left:385px;top:431px;width:3px;height:1px;background:#32CD32;"></div>
<div style="left:394px;top:431px;width:9px;height:1px;background:#32CD32;"></div>
<div style="left:409px;top:431px;width:3px;height:1px;background:#32CD32;"></div>
<div style="left:418px;top:431px;width:9px;height:1px;background:#32CD32;"></div>
<div style="left:433px;top:431px;width:3px;height:1px;background:#32CD32;"></div>
<div style="left:442px;top:431px;width:9px;height:1px;background:#32CD32;"></div>
<div style="left:457px;top:431px;width:3px;height:1px;background:#32CD32;"></div>
<div style="left:466px;top:431px;width:9px;height:1px;background:#32CD32;"></div>
<div style="left:481px;top:431px;width:3px;height:1px;background:#32CD32;"></div>
<div style="left:490px;top:431px;width:9px;height:1px;background:#32CD32;"></div>
<div style="left:505px;top:431px;width:3px;height:1px;background:#32CD32;"></div>
<div style="left:514px;top:431px;width:9px;height:1px;background:#32CD32;"></div>
<div style="left:529px;top:431px;width:3px;height:1px;background:#32CD32;"></div>
<div style="left:538px;top:431px;width:9px;height:1px;background:#32CD32;"></div>
<div style="left:553px;top:431px;width:3px;height:1px;background:#32CD32;"></div>
<div style="left:562px;top:431px;width:9px;height:1px;background:#32CD32;"></div>
<div style="left:577px;top:431px;width:3px;height:1px;background:#32CD32;"></div>
<div style="left:586px;top:431px;width:9px;height:1px;background:#32CD32;"></div>
<div style="left:601px;top:431px;width:3px;height:1px;background:#32CD32;"></div>
<div style="left:610px;top:431px;width:9px;height:1px;background:#32CD32;"></div>
<div style="left:625px;top:431px;width:3px;height:1px;background:#32CD32;"></div>
<div style="left:634px;top:431px;width:9px;height:1px;background:#32CD32;"></div>
<div style="left:649px;top:431px;width:3px;height:1px;background:#32CD32;"></div>
<div style="left:658px;top:431px;width:9px;height:1px;background:#32CD32;"></div>
<div style="left:673px;top:431px;width:3px;height:1px;background:#32CD32;"></div>
<div style="left:682px;top:431px;width:9px;height:1px;background:#32CD32;"></div>
<div style="left:697px;top:431px;width:3px;height:1px;background:#32CD32;"></div>
<div style="left:706px;top:431px;width:9px;height:1px;background:#32CD32;"></div>
<div style="left:721px;top:431px;width:3px;height:1px;background:#32CD32;"></div>
<div style="left:730px;top:431px;width:9px;height:1px;background:#32CD32;"></div>
<div style="left:745px;top:431px;width:3px;height:1px;background:#32CD32;"></div>
<div style="left:754px;top:431px;width:9px;height:1px;background:#32CD32;"></div>
<div style="left:769px;top:431px;width:3px;height:1px;background:#32CD32;"></div>
<div style="left:778px;top:431px;width:9px;height:1px;background:#32CD32;"></div>
<div style="left:793px;top:431px;width:3px;height:1px;background:#32CD32;"></div>
<div style="left:802px;top:431px;width:9px;height:1px;background:#32CD32;"></div>
<div style="left:817px;top:431px;width:3px;height:1px;background:#32CD32;"></div>
<div style="left:826px;top:431px;width:9px;height:1px;background:#32CD32;"></div>
<div style="left:841px;top:431px;width:3px;height:1px;background:#32CD32;"></div>
<div style="left:850px;top:431px;width:9px;height:1px;background:#32CD32;"></div>
<div style="left:865px;top:431px;width:3px;height:1px;background:#32CD32;"></div>
<div style="left:874px;top:431px;width:9px;height:1px;background:#32CD32;"></div>
<div style="left:889px;top:431px;width:3px;height:1px;background:#32CD32;"></div>
<div style="left:898px;top:431px;width:9px;height:1px;background:#32CD32;"></div>
<div style="left:913px;top:431px;width:3px;height:1px;background:#32CD32;"></div>
<div style="left:922px;top:431px;width:9px;height:1px;background:#32CD32;"></div>
<div style="left:937px;top:431px;width:3px;height:1px;background:#32CD32;"></div>
<div style="left:946px;top:431px;width:9px;height:1px;background:#32CD32;"></div>
<div style="left:961px;top:431px;width:3px;height:1px;background:#32CD32;"></div>
<div style="left:970px;top:431px;width:9px;height:1px;background:#32CD32;"></div>
<div style="left:10px;top:542px;width:9px;height:1px;background:#32CD32;"></div>
<div style="left:25px;top:542px;width:3px;height:1px;background:#32CD32;"></div>
<div style="left:34px;top:542px;width:9px;height:1px;background:#32CD32;"></div>
<div style="left:49px;top:542px;width:3px;height:1px;background:#32CD32;"></div>
<div style="left:58px;top:542px;width:9px;height:1px;background:#32CD32;"></div>
<div style="left:73px;top:542px;width:3px;height:1px;background:#32CD32;"></div>
<div style="left:82px;top:542px;width:9px;height:1px;background:#32CD32;"></div>
<div style="left:97px;top:542px;width:3px;height:1px;background:#32CD32;"></div>
<div style="left:106px;top:542px;width:9px;height:1px;background:#32CD32;"></div>
<div style="left:121px;top:542px;width:3px;height:1px;background:#32CD32;"></div>
<div style="left:130px;top:542px;width:9px;height:1px;background:#32CD32;"></div>
<div style="left:145px;top:542px;width:3px;height:1px;background:#32CD32;"></div>
<div style="left:154px;top:542px;width:9px;height:1px;background:#32CD32;"></div>
<div style="left:169px;top:542px;width:3px;height:1px;background:#32CD32;"></div>
<div style="left:178px;top:542px;width:9px;height:1px;background:#32CD32;"></div>
<div style="left:193px;top:542px;width:3px;height:1px;background:#32CD32;"></div>
<div style="left:202px;top:542px;width:9px;height:1px;background:#32CD32;"></div>
<div style="left:217px;top:542px;width:3px;height:1px;background:#32CD32;"></div>
<div style="left:226px;top:542px;width:9px;height:1px;background:#32CD32;"></div>
<div style="left:241px;top:542px;width:3px;height:1px;background:#32CD32;"></div>
<div style="left:250px;top:542px;width:9px;height:1px;background:#32CD32;"></div>
<div style="left:265px;top:542px;width:3px;height:1px;background:#32CD32;"></div>
<div style="left:274px;top:542px;width:9px;height:1px;background:#32CD32;"></div>
<div style="left:289px;top:542px;width:3px;height:1px;background:#32CD32;"></div>
<div style="left:298px;top:542px;width:9px;height:1px;background:#32CD32;"></div>
<div style="left:313px;top:542px;width:3px;height:1px;background:#32CD32;"></div>
<div style="left:322px;top:542px;width:9px;height:1px;background:#32CD32;"></div>
<div style="left:337px;top:542px;width:3px;height:1px;background:#32CD32;"></div>
<div style="left:346px;top:542px;width:9px;height:1px;background:#32CD32;"></div>
<div style="left:361px;top:542px;width:3px;height:1px;background:#32CD32;"></div>
<div style="left:370px;top:542px;width:9px;height:1px;background:#32CD32;"></div>
<div style="left:385px;top:542px;width:3px;height:1px;background:#32CD32;"></div>
<div style="left:394px;top:542px;width:9px;height:1px;background:#32CD32;"></div>
<div style="left:409px;top:542px;width:3px;height:1px;background:#32CD32;"></div>
<div style="left:418px;top:542px;width:9px;height:1px;background:#32CD32;"></div>
<div style="left:433px;top:542px;width:3px;height:1px;background:#32CD32;"></div>
<div style="left:442px;top:542px;width:9px;height:1px;background:#32CD32;"></div>
<div style="left:457px;top:542px;width:3px;height:1px;background:#32CD32;"></div>
<div style="left:466px;top:542px;width:9px;height:1px;background:#32CD32;"></div>
<div style="left:481px;top:542px;width:3px;height:1px;background:#32CD32;"></div>
<div style="left:490px;top:542px;width:9px;height:1px;background:#32CD32;"></div>
<div style="left:505px;top:542px;width:3px;height:1px;background:#32CD32;"></div>
<div style="left:514px;top:542px;width:9px;height:1px;background:#32CD32;"></div>
<div style="left:529px;top:542px;width:3px;height:1px;background:#32CD32;"></div>
<div style="left:538px;top:542px;width:9px;height:1px;background:#32CD32;"></div>
<div style="left:553px;top:542px;width:3px;height:1px;background:#32CD32;"></div>
<div style="left:562px;top:542px;width:9px;height:1px;background:#32CD32;"></div>
<div style="left:577px;top:542px;width:3px;height:1px;background:#32CD32;"></div>
<div style="left:586px;top:542px;width:9px;height:1px;background:#32CD32;"></div>
<div style="left:601px;top:542px;width:3px;height:1px;background:#32CD32;"></div>
<div style="left:610px;top:542px;width:9px;height:1px;background:#32CD32;"></div>
<div style="left:625px;top:542px;width:3px;height:1px;background:#32CD32;"></div>
<div style="left:634px;top:542px;width:9px;height:1px;background:#32CD32;"></div>
<div style="left:649px;top:542px;width:3px;height:1px;background:#32CD32;"></div>
<div style="left:658px;top:542px;width:9px;height:1px;background:#32CD32;"></div>
<div style="left:673px;top:542px;width:3px;height:1px;background:#32CD32;"></div>
<div style="left:682px;top:542px;width:9px;height:1px;background:#32CD32;"></div>
<div style="left:697px;top:542px;width:3px;height:1px;background:#32CD32;"></div>
<div style="left:706px;top:542px;width:9px;height:1px;background:#32CD32;"></div>
<div style="left:721px;top:542px;width:3px;height:1px;background:#32CD32;"></div>
<div style="left:730px;top:542px;width:9px;height:1px;background:#32CD32;"></div>
<div style="left:745px;top:542px;width:3px;height:1px;background:#32CD32;"></div>
<div style="left:754px;top:542px;width:9px;height:1px;background:#32CD32;"></div>
<div style="left:769px;top:542px;width:3px;height:1px;background:#32CD32;"></div>
<div style="left:778px;top:542px;width:9px;height:1px;background:#32CD32;"></div>
<div style="left:793px;top:542px;width:3px;height:1px;background:#32CD32;"></div>
<div style="left:802px;top:542px;width:9px;height:1px;background:#32CD32;"></div>
<div style="left:817px;top:542px;width:3px;height:1px;background:#32CD32;"></div>
<div style="left:826px;top:542px;width:9px;height:1px;background:#32CD32;"></div>
<div style="left:841px;top:542px;width:3px;height:1px;background:#32CD32;"></div>
<div style="left:850px;top:542px;width:9px;height:1px;background:#32CD32;"></div>
<div style="left:865px;top:542px;width:3px;height:1px;background:#32CD32;"></div>
<div style="left:874px;top:542px;width:9px;height:1px;background:#32CD32;"></div>
<div style="left:889px;top:542px;width:3px;height:1px;background:#32CD32;"></div>
<div style="left:898px;top:542px;width:9px;height:1px;background:#32CD32;"></div>
<div style="left:913px;top:542px;width:3px;height:1px;background:#32CD32;"></div>
<div style="left:922px;top:542px;width:9px;height:1px;background:#32CD32;"></div>
<div style="left:937px;top:542px;width:3px;height:1px;background:#32CD32;"></div>
<div style="left:946px;top:542px;width:9px;height:1px;background:#32CD32;"></div>
<div style="left:961px;top:542px;width:3px;height:1px;background:#32CD32;"></div>
<div style="left:970px;top:542px;width:9px;height:1px;background:#32CD32;"></div>
<span style="left:14px;top:319px;color:#fff;font-size:10px;transform:scaleX(0.94);transform-origin:0 0">#25360204 buy stop</span>
<span style="left:14px;top:422px;color:#fff;font-size:10px;transform:scaleX(0.94);transform-origin:0 0">#25357607 buy</span>
<span style="left:14px;top:533px;color:#fff;font-size:10px;transform:scaleX(0.94);transform-origin:0 0">#25360424 buy limit</span>
<div style="left:9px;top:377px;width:977px;height:1px;background:#FF0000;"></div>
<div style="left:9px;top:404px;width:977px;height:1px;background:#778899;"></div>
<div style="left:9px;top:164px;width:1px;height:4px;background:#FF0000;"></div>
<div style="left:9px;top:152px;width:6px;height:12px;background:#FF0000;"></div>
<div style="left:25px;top:144px;width:1px;height:12px;background:#00FF00;"></div>
<div style="left:20px;top:156px;width:11px;height:1px;background:#00FF00;"></div>
<div style="left:36px;top:163px;width:11px;height:20px;background:#FF0000;"></div>
<div style="left:57px;top:233px;width:1px;height:19px;background:#FF0000;"></div>
<div style="left:52px;top:190px;width:11px;height:43px;background:#FF0000;"></div>
<div style="left:68px;top:213px;width:11px;height:12px;background:#00FF00;"></div>
<div style="left:84px;top:221px;width:11px;height:35px;background:#FF0000;"></div>
<div style="left:105px;top:243px;width:1px;height:20px;background:#00FF00;"></div>
<div style="left:100px;top:263px;width:11px;height:4px;background:#00FF00;"></div>
<div style="left:121px;top:232px;width:1px;height:27px;background:#00FF00;"></div>
<div style="left:116px;top:259px;width:11px;height:12px;background:#00FF00;"></div>
<div style="left:137px;top:352px;width:1px;height:57px;background:#FF0000;"></div>
<div style="left:132px;top:266px;width:11px;height:86px;background:#FF0000;"></div>
<div style="left:153px;top:351px;width:1px;height:11px;background:#FF0000;"></div>
<div style="left:153px;top:367px;width:1px;height:19px;background:#FF0000;"></div>
<div style="left:148px;top:362px;width:11px;height:5px;background:#FF0000;"></div>
<div style="left:169px;top:331px;width:1px;height:8px;background:#00FF00;"></div>
<div style="left:169px;top:374px;width:1px;height:16px;background:#00FF00;"></div>
<div style="left:164px;top:339px;width:11px;height:35px;background:#00FF00;"></div>
<div style="left:185px;top:320px;width:1px;height:19px;background:#00FF00;"></div>
<div style="left:185px;top:348px;width:1px;height:34px;background:#00FF00;"></div>
<div style="left:180px;top:339px;width:11px;height:9px;background:#00FF00;"></div>
<div style="left:201px;top:316px;width:1px;height:12px;background:#FF0000;"></div>
<div style="left:201px;top:355px;width:1px;height:8px;background:#FF0000;"></div>
<div style="left:196px;top:328px;width:11px;height:27px;background:#FF0000;"></div>
<div style="left:217px;top:324px;width:1px;height:38px;background:#FF0000;"></div>
<div style="left:212px;top:362px;width:11px;height:47px;background:#FF0000;"></div>
<div style="left:233px;top:581px;width:1px;height:11px;background:#FF0000;"></div>
<div style="left:228px;top:396px;width:11px;height:185px;background:#FF0000;"></div>
<div style="left:249px;top:511px;width:1px;height:8px;background:#00FF00;"></div>
<div style="left:249px;top:573px;width:1px;height:8px;background:#00FF00;"></div>
<div style="left:244px;top:519px;width:11px;height:54px;background:#00FF00;"></div>
<div style="left:265px;top:503px;width:1px;height:8px;background:#00FF00;"></div>
<div style="left:265px;top:527px;width:1px;height:12px;background:#00FF00;"></div>
<div style="left:260px;top:511px;width:11px;height:16px;background:#00FF00;"></div>
<div style="left:281px;top:558px;width:1px;height:8px;background:#FF0000;"></div>
<div style="left:276px;top:523px;width:11px;height:35px;background:#FF0000;"></div>
<div style="left:297px;top:550px;width:1px;height:8px;background:#00FF00;"></div>
<div style="left:292px;top:515px;width:11px;height:35px;background:#00FF00;"></div>
<div style="left:313px;top:500px;width:1px;height:7px;background:#FF0000;"></div>
<div style="left:308px;top:507px;width:11px;height:13px;background:#FF0000;"></div>
<div style="left:324px;top:526px;width:11px;height:51px;background:#FF0000;"></div>
<div style="left:345px;top:538px;width:1px;height:11px;background:#00FF00;"></div>
<div style="left:340px;top:549px;width:11px;height:43px;background:#00FF00;"></div>
<div style="left:361px;top:558px;width:1px;height:8px;background:#00FF00;"></div>
<div style="left:356px;top:530px;width:11px;height:28px;background:#00FF00;"></div>
<div style="left:377px;top:511px;width:1px;height:8px;background:#00FF00;"></div>
<div style="left:377px;top:539px;width:1px;height:23px;background:#00FF00;"></div>
<div style="left:372px;top:519px;width:11px;height:20px;background:#00FF00;"></div>
<div style="left:388px;top:526px;width:11px;height:32px;background:#FF0000;"></div>
<div style="left:404px;top:488px;width:11px;height:59px;background:#00FF00;"></div>
<div style="left:425px;top:461px;width:1px;height:8px;background:#00FF00;"></div>
<div style="left:420px;top:469px;width:11px;height:28px;background:#00FF00;"></div>
<div style="left:441px;top:442px;width:1px;height:19px;background:#FF0000;"></div>
<div style="left:436px;top:461px;width:11px;height:9px;background:#FF0000;"></div>
<div style="left:457px;top:485px;width:1px;height:4px;background:#FF0000;"></div>
<div style="left:452px;top:454px;width:11px;height:31px;background:#FF0000;"></div>
<div style="left:473px;top:474px;width:1px;height:30px;background:#00FF00;"></div>
<div style="left:468px;top:465px;width:11px;height:9px;background:#00FF00;"></div>
<div style="left:484px;top:454px;width:11px;height:8px;background:#FF0000;"></div>
<div style="left:500px;top:450px;width:11px;height:20px;background:#FF0000;"></div>
<div style="left:521px;top:404px;width:1px;height:15px;background:#00FF00;"></div>
<div style="left:516px;top:419px;width:11px;height:40px;background:#00FF00;"></div>
<div style="left:537px;top:377px;width:1px;height:4px;background:#00FF00;"></div>
<div style="left:532px;top:381px;width:11px;height:32px;background:#00FF00;"></div>
<div style="left:553px;top:381px;width:1px;height:12px;background:#00FF00;"></div>
<div style="left:553px;top:394px;width:1px;height:15px;background:#00FF00;"></div>
<div style="left:548px;top:393px;width:11px;height:1px;background:#00FF00;"></div>
<div style="left:569px;top:459px;width:1px;height:23px;background:#FF0000;"></div>
<div style="left:564px;top:408px;width:11px;height:51px;background:#FF0000;"></div>
<div style="left:585px;top:427px;width:1px;height:19px;background:#00FF00;"></div>
<div style="left:585px;top:447px;width:1px;height:12px;background:#00FF00;"></div>
<div style="left:580px;top:446px;width:11px;height:1px;background:#00FF00;"></div>
<div style="left:601px;top:419px;width:1px;height:12px;background:#FF0000;"></div>
<div style="left:601px;top:482px;width:1px;height:7px;background:#FF0000;"></div>
<div style="left:596px;top:431px;width:11px;height:51px;background:#FF0000;"></div>
<div style="left:617px;top:435px;width:1px;height:7px;background:#00FF00;"></div>
<div style="left:612px;top:442px;width:11px;height:24px;background:#00FF00;"></div>
<div style="left:633px;top:435px;width:1px;height:15px;background:#00FF00;"></div>
<div style="left:633px;top:459px;width:1px;height:7px;background:#00FF00;"></div>
<div style="left:628px;top:450px;width:11px;height:9px;background:#00FF00;"></div>
<div style="left:649px;top:520px;width:1px;height:4px;background:#FF0000;"></div>
<div style="left:644px;top:473px;width:11px;height:47px;background:#FF0000;"></div>
<div style="left:665px;top:508px;width:1px;height:12px;background:#00FF00;"></div>
<div style="left:660px;top:507px;width:11px;height:1px;background:#00FF00;"></div>
<div style="left:681px;top:516px;width:1px;height:34px;background:#FF0000;"></div>
<div style="left:676px;top:496px;width:11px;height:20px;background:#FF0000;"></div>
<div style="left:692px;top:507px;width:11px;height:55px;background:#FF0000;"></div>
<div style="left:713px;top:492px;width:1px;height:15px;background:#00FF00;"></div>
<div style="left:708px;top:507px;width:11px;height:62px;background:#00FF00;"></div>
<div style="left:724px;top:496px;width:11px;height:81px;background:#FF0000;"></div>
<div style="left:740px;top:519px;width:11px;height:50px;background:#00FF00;"></div>
<div style="left:761px;top:412px;width:1px;height:11px;background:#00FF00;"></div>
<div style="left:756px;top:423px;width:11px;height:108px;background:#00FF00;"></div>
<div style="left:777px;top:431px;width:1px;height:20px;background:#00FF00;"></div>
<div style="left:772px;top:408px;width:11px;height:23px;background:#00FF00;"></div>
<div style="left:793px;top:417px;width:1px;height:26px;background:#00FF00;"></div>
<div style="left:788px;top:408px;width:11px;height:9px;background:#00FF00;"></div>
<div style="left:809px;top:413px;width:1px;height:30px;background:#00FF00;"></div>
<div style="left:804px;top:412px;width:11px;height:1px;background:#00FF00;"></div>
<div style="left:825px;top:408px;width:1px;height:11px;background:#FF0000;"></div>
<div style="left:825px;top:436px;width:1px;height:46px;background:#FF0000;"></div>
<div style="left:820px;top:419px;width:11px;height:17px;background:#FF0000;"></div>
<div style="left:841px;top:381px;width:1px;height:23px;background:#00FF00;"></div>
<div style="left:836px;top:404px;width:11px;height:20px;background:#00FF00;"></div>
<div style="left:256px;top:116px;width:1px;height:495px;background:#fff;"></div>
<div style="left:989px;top:110px;width:29px;height:9px;background:#fff;"></div>
<span style="left:992px;top:110px;color:#000;font-size:10px;transform:scaleX(0.94);transform-origin:0 0">75.40</span>
<div style="left:989px;top:371px;width:29px;height:11px;background:#FF0000;"></div>
<span style="left:992px;top:372px;color:#000;font-size:10px;transform:scaleX(0.94);transform-origin:0 0">74.71</span>
<div style="left:989px;top:398px;width:29px;height:11px;background:#fff;"></div>
<span style="left:992px;top:399px;color:#000;font-size:10px;transform:scaleX(0.94);transform-origin:0 0">74.64</span>
<span style="left:13px;top:116px;color:#fff;font-size:10px;transform:scaleX(0.94);transform-origin:0 0">OIL,M5  74.59 74.70 74.59 74.64</span>
<div style="left:9px;top:612px;width:1px;height:3px;background:#fff;"></div>
<div style="left:73px;top:612px;width:1px;height:3px;background:#fff;"></div>
<div style="left:137px;top:612px;width:1px;height:3px;background:#fff;"></div>
<div style="left:201px;top:612px;width:1px;height:3px;background:#fff;"></div>
<div style="left:265px;top:612px;width:1px;height:3px;background:#fff;"></div>
<div style="left:329px;top:612px;width:1px;height:3px;background:#fff;"></div>
<div style="left:393px;top:612px;width:1px;height:3px;background:#fff;"></div>
<div style="left:457px;top:612px;width:1px;height:3px;background:#fff;"></div>
<div style="left:521px;top:612px;width:1px;height:3px;background:#fff;"></div>
<div style="left:585px;top:612px;width:1px;height:3px;background:#fff;"></div>
<div style="left:649px;top:612px;width:1px;height:3px;background:#fff;"></div>
<div style="left:713px;top:612px;width:1px;height:3px;background:#fff;"></div>
<div style="left:777px;top:612px;width:1px;height:3px;background:#fff;"></div>
<div style="left:841px;top:612px;width:1px;height:3px;background:#fff;"></div>
<span style="left:8px;top:617px;color:#fff;font-size:10px;transform:scaleX(0.94);transform-origin:0 0">20 Aug 2010</span>
<span style="left:72px;top:617px;color:#fff;font-size:10px;transform:scaleX(0.94);transform-origin:0 0">20 Aug 11:35</span>
<span style="left:136px;top:617px;color:#fff;font-size:10px;transform:scaleX(0.94);transform-origin:0 0">20 Aug 11:55</span>
<span style="left:200px;top:617px;color:#fff;font-size:10px;transform:scaleX(0.94);transform-origin:0 0">20 Aug 12:15</span>
<span style="left:264px;top:617px;color:#fff;font-size:10px;transform:scaleX(0.94);transform-origin:0 0">20 Aug 12:35</span>
<span style="left:328px;top:617px;color:#fff;font-size:10px;transform:scaleX(0.94);transform-origin:0 0">20 Aug 12:55</span>
<span style="left:392px;top:617px;color:#fff;font-size:10px;transform:scaleX(0.94);transform-origin:0 0">20 Aug 13:15</span>
<span style="left:456px;top:617px;color:#fff;font-size:10px;transform:scaleX(0.94);transform-origin:0 0">20 Aug 13:35</span>
<span style="left:520px;top:617px;color:#fff;font-size:10px;transform:scaleX(0.94);transform-origin:0 0">20 Aug 13:55</span>
<span style="left:584px;top:617px;color:#fff;font-size:10px;transform:scaleX(0.94);transform-origin:0 0">20 Aug 14:15</span>
<span style="left:648px;top:617px;color:#fff;font-size:10px;transform:scaleX(0.94);transform-origin:0 0">20 Aug 14:35</span>
<span style="left:712px;top:617px;color:#fff;font-size:10px;transform:scaleX(0.94);transform-origin:0 0">20 Aug 14:55</span>
<span style="left:776px;top:617px;color:#fff;font-size:10px;transform:scaleX(0.94);transform-origin:0 0">20 Aug 15:15</span>
<span style="left:840px;top:617px;color:#fff;font-size:10px;transform:scaleX(0.94);transform-origin:0 0">20 Aug 15:35</span>
<div style="left:217px;top:615px;width:78px;height:11px;background:#fff;"></div>
<div style="left:217px;top:626px;width:78px;height:3px;background:#000;"></div>
<span style="left:220px;top:617px;color:#000;font-size:10px;transform:scaleX(0.94);transform-origin:0 0">2010.08.20 12:30</span>
<div style="left:256px;top:612px;width:1px;height:3px;background:#fff;"></div>
<div style="left:256px;top:615px;width:1px;height:10px;background:#000;"></div>
<div style="left:6px;top:629px;width:1020px;height:2px;background:#fff;"></div>
<div style="left:6px;top:631px;width:1020px;height:1px;background:#000;"></div>
<div style="left:6px;top:632px;width:1021px;height:19px;background:#ECE9D8;"></div>
<span style="left:18px;top:635px;color:#6B6B5F;transform:scaleX(0.955);transform-origin:0 0">DE30,M5</span>
<span style="left:83px;top:635px;color:#6B6B5F;transform:scaleX(0.955);transform-origin:0 0">DE30,Daily</span>
<span style="left:159px;top:635px;color:#6B6B5F;transform:scaleX(0.955);transform-origin:0 0">SPA35,M5</span>
<span style="left:230px;top:635px;color:#6B6B5F;transform:scaleX(0.955);transform-origin:0 0">SPA35,Daily</span>
<span style="left:311px;top:635px;color:#6B6B5F;transform:scaleX(0.955);transform-origin:0 0">OIL,Daily</span>
<span style="left:380px;top:635px;color:#6B6B5F;transform:scaleX(0.955);transform-origin:0 0">OIL,Weekly</span>
<span style="left:458px;top:635px;color:#6B6B5F;transform:scaleX(0.955);transform-origin:0 0">EURUSD,H4</span>
<span style="left:537px;top:635px;color:#6B6B5F;transform:scaleX(0.955);transform-origin:0 0">EURUSD,Weekly</span>
<span style="left:639px;top:635px;color:#6B6B5F;transform:scaleX(0.955);transform-origin:0 0">ADS.DE,M15</span>
<div style="left:72px;top:636px;width:1px;height:11px;background:#6B6B5F;"></div>
<div style="left:148px;top:636px;width:1px;height:11px;background:#6B6B5F;"></div>
<div style="left:220px;top:636px;width:1px;height:11px;background:#6B6B5F;"></div>
<div style="left:300px;top:636px;width:1px;height:11px;background:#6B6B5F;"></div>
<div style="left:368px;top:636px;width:1px;height:11px;background:#6B6B5F;"></div>
<div style="left:448px;top:636px;width:1px;height:11px;background:#6B6B5F;"></div>
<div style="left:528px;top:636px;width:1px;height:11px;background:#6B6B5F;"></div>
<div style="left:628px;top:636px;width:1px;height:11px;background:#6B6B5F;"></div>
<div style="left:712px;top:629px;width:56px;height:21px;background:#fff;border:1px solid #000;border-top:none"></div>
<span style="left:722px;top:635px;transform:scaleX(0.955);transform-origin:0 0">OIL,M5</span>
<svg style="left:998px;top:637px" width="24" height="9"><path d="M5 1v7L1 4.5z" fill="#A0A0A0"/><path d="M18 1v7l4-3.5z" fill="#A0A0A0"/></svg>
<div style="left:6px;top:651px;width:1021px;height:1px;background:#fff;"></div>
<div style="left:6px;top:652px;width:1021px;height:66px;background:#ECE9D8;"></div>
<svg style="left:8px;top:658px" width="6" height="5"><path d="M0.5 0.5l5 4M5.5 0.5l-5 4" stroke="#000" stroke-width="1.8"/></svg>
<div style="left:6px;top:669px;width:12px;height:49px;background:linear-gradient(#9AB8F2,#6C90DD)"></div>
<span style="left:7px;top:719px;width:49px;height:12px;transform-origin:0 0;transform:rotate(-90deg);color:#fff;font-size:11px;line-height:12px;text-align:center">Terminal</span>
<div style="left:19px;top:655px;width:1px;height:62px;background:#ACA899;"></div>
<div style="left:19px;top:717px;width:1007px;height:1px;background:#fff;"></div>
<div style="left:1025px;top:655px;width:1px;height:62px;background:#fff;"></div>
<div style="left:19px;top:655px;width:1006px;height:1px;background:#ACA899;"></div>
<div style="left:20px;top:656px;width:1005px;height:41px;background:#fff;"></div>
<div style="left:20px;top:656px;width:985px;height:20px;background:#EBEADB;"></div>
<div style="left:20px;top:672px;width:985px;height:1px;background:#E5E2D0;"></div>
<div style="left:20px;top:673px;width:985px;height:1px;background:#DDD9C4;"></div>
<div style="left:20px;top:674px;width:985px;height:1px;background:#D3CFB9;"></div>
<div style="left:20px;top:675px;width:985px;height:1px;background:#C9C5AE;"></div>
<div style="left:1005px;top:656px;width:20px;height:41px;background:#F2F1EA;"></div>
<div style="left:105px;top:659px;width:1px;height:13px;background:#C7C5B2;"></div>
<div style="left:106px;top:659px;width:1px;height:13px;background:#fff;"></div>
<div style="left:105px;top:677px;width:1px;height:20px;background:#D0D0D0;"></div>
<div style="left:253px;top:659px;width:1px;height:13px;background:#C7C5B2;"></div>
<div style="left:254px;top:659px;width:1px;height:13px;background:#fff;"></div>
<div style="left:253px;top:677px;width:1px;height:20px;background:#D0D0D0;"></div>
<div style="left:320px;top:659px;width:1px;height:13px;background:#C7C5B2;"></div>
<div style="left:321px;top:659px;width:1px;height:13px;background:#fff;"></div>
<div style="left:320px;top:677px;width:1px;height:20px;background:#D0D0D0;"></div>
<div style="left:373px;top:659px;width:1px;height:13px;background:#C7C5B2;"></div>
<div style="left:374px;top:659px;width:1px;height:13px;background:#fff;"></div>
<div style="left:373px;top:677px;width:1px;height:20px;background:#D0D0D0;"></div>
<div style="left:440px;top:659px;width:1px;height:13px;background:#C7C5B2;"></div>
<div style="left:441px;top:659px;width:1px;height:13px;background:#fff;"></div>
<div style="left:440px;top:677px;width:1px;height:20px;background:#D0D0D0;"></div>
<div style="left:507px;top:659px;width:1px;height:13px;background:#C7C5B2;"></div>
<div style="left:508px;top:659px;width:1px;height:13px;background:#fff;"></div>
<div style="left:507px;top:677px;width:1px;height:20px;background:#D0D0D0;"></div>
<div style="left:574px;top:659px;width:1px;height:13px;background:#C7C5B2;"></div>
<div style="left:575px;top:659px;width:1px;height:13px;background:#fff;"></div>
<div style="left:574px;top:677px;width:1px;height:20px;background:#D0D0D0;"></div>
<div style="left:641px;top:659px;width:1px;height:13px;background:#C7C5B2;"></div>
<div style="left:642px;top:659px;width:1px;height:13px;background:#fff;"></div>
<div style="left:641px;top:677px;width:1px;height:20px;background:#D0D0D0;"></div>
<div style="left:789px;top:659px;width:1px;height:13px;background:#C7C5B2;"></div>
<div style="left:790px;top:659px;width:1px;height:13px;background:#fff;"></div>
<div style="left:789px;top:677px;width:1px;height:20px;background:#D0D0D0;"></div>
<div style="left:856px;top:659px;width:1px;height:13px;background:#C7C5B2;"></div>
<div style="left:857px;top:659px;width:1px;height:13px;background:#fff;"></div>
<div style="left:856px;top:677px;width:1px;height:20px;background:#D0D0D0;"></div>
<div style="left:923px;top:659px;width:1px;height:13px;background:#C7C5B2;"></div>
<div style="left:924px;top:659px;width:1px;height:13px;background:#fff;"></div>
<div style="left:923px;top:677px;width:1px;height:20px;background:#D0D0D0;"></div>
<div style="left:1003px;top:659px;width:1px;height:13px;background:#C7C5B2;"></div>
<div style="left:1004px;top:659px;width:1px;height:13px;background:#fff;"></div>
<span style="left:29px;top:661px;">Orden</span>
<span style="left:99px;top:661px;width:150px;text-align:right">Tiempo</span>
<span style="left:166px;top:661px;width:150px;text-align:right">Tipo</span>
<span style="left:331px;top:661px;">Volu...</span>
<span style="left:286px;top:661px;width:150px;text-align:right">Símbolo</span>
<span style="left:353px;top:661px;width:150px;text-align:right">Precio</span>
<span style="left:419px;top:661px;width:150px;text-align:right">S / L</span>
<span style="left:487px;top:661px;width:150px;text-align:right">T / P</span>
<span style="left:618px;top:661px;width:150px;text-align:right">Tiempo</span>
<span style="left:701px;top:661px;width:150px;text-align:right">Precio</span>
<span style="left:769px;top:661px;width:150px;text-align:right">Swap</span>
<span style="left:848px;top:661px;width:150px;text-align:right">Beneficios</span>
<svg style="left:779px;top:663px" width="9" height="9"><path d="M0.5 1.5h7L4 8z" fill="none" stroke="#ACA899"/></svg>
<span style="left:44px;top:681px;">25358621</span>
<span style="left:101px;top:681px;width:150px;text-align:right">2010.08.20 14:55</span>
<span style="left:168px;top:681px;width:150px;text-align:right">buy</span>
<span style="left:221px;top:681px;width:150px;text-align:right">0.10</span>
<span style="left:288px;top:681px;width:150px;text-align:right">oil</span>
<span style="left:355px;top:681px;width:150px;text-align:right">74.28</span>
<span style="left:422px;top:681px;width:150px;text-align:right">0.00</span>
<span style="left:489px;top:681px;width:150px;text-align:right">0.00</span>
<span style="left:636px;top:681px;width:150px;text-align:right">2010.08.20 15:31</span>
<span style="left:703px;top:681px;width:150px;text-align:right">74.58</span>
<span style="left:771px;top:681px;width:150px;text-align:right">0.00</span>
<span style="left:851px;top:681px;width:150px;text-align:right">47.26</span>
<svg style="left:22px;top:679px" width="16" height="16"><path d="M1.5 0.5h7l3 3v11h-10z" fill="#F4F4F4" stroke="#666"/><path d="M8.5 0.5v3h3" fill="none" stroke="#666"/><circle cx="11" cy="12.5" r="3.2" fill="#1F6FEF" stroke="#0A3FA0" stroke-width="0.6"/><circle cx="10.3" cy="11.6" r="1" fill="#9CC4FF"/></svg>
<div style="left:1006px;top:657px;width:17px;height:17px;border:1px solid #fff;border-radius:3px;background:linear-gradient(135deg,#D6E2FC,#B4C9F6)"></div>
<svg style="left:1006px;top:657px" width="17" height="17"><path d="M4.5 10l4-4 4 4" fill="none" stroke="#4D6185" stroke-width="2"/></svg>
<div style="left:1006px;top:679px;width:17px;height:17px;border:1px solid #fff;border-radius:3px;background:linear-gradient(135deg,#D6E2FC,#B4C9F6)"></div>
<svg style="left:1006px;top:679px" width="17" height="17"><path d="M4.5 7l4 4 4-4" fill="none" stroke="#4D6185" stroke-width="2"/></svg>
<div style="left:20px;top:696px;width:985px;height:1px;background:#D8D8D8;"></div>
<div style="left:20px;top:697px;width:1004px;height:1px;background:#000;"></div>
<span style="left:31px;top:702px;color:#6B6B5F">Operaciones</span>
<div style="left:102px;top:697px;width:114px;height:18px;background:#fff;border:1px solid #000;border-top:none"></div>
<span style="left:111px;top:702px;transform:scaleX(0.97);transform-origin:0 0">Historial de cuentas</span>
<span style="left:226px;top:702px;color:#6B6B5F">Avisos</span>
<span style="left:276px;top:702px;color:#6B6B5F">Buzón</span>
<span style="left:325px;top:702px;color:#6B6B5F">Diario</span>
<div style="left:267px;top:701px;width:1px;height:11px;background:#6B6B5F;"></div>
<div style="left:316px;top:701px;width:1px;height:11px;background:#6B6B5F;"></div>
<div style="left:363px;top:701px;width:1px;height:11px;background:#6B6B5F;"></div>
<div style="left:6px;top:720px;width:1021px;height:1px;background:#ACA899;"></div>
<div style="left:6px;top:721px;width:1021px;height:1px;background:#fff;"></div>
<div style="left:6px;top:722px;width:1021px;height:19px;background:#ECE9D8;"></div>
<div style="left:6px;top:741px;width:1021px;height:1px;background:#F8F4E0;"></div>
<span style="left:5px;top:728px;">Para obtener ayuda, pulse F1</span>
<span style="left:208px;top:728px;">Default</span>
<div style="left:204px;top:725px;width:1px;height:16px;background:#ACA899;"></div>
<div style="left:205px;top:725px;width:1px;height:16px;background:#fff;"></div>
<div style="left:336px;top:725px;width:1px;height:16px;background:#ACA899;"></div>
<div style="left:337px;top:725px;width:1px;height:16px;background:#fff;"></div>
<div style="left:455px;top:725px;width:1px;height:16px;background:#ACA899;"></div>
<div style="left:456px;top:725px;width:1px;height:16px;background:#fff;"></div>
<div style="left:539px;top:725px;width:1px;height:16px;background:#ACA899;"></div>
<div style="left:540px;top:725px;width:1px;height:16px;background:#fff;"></div>
<div style="left:622px;top:725px;width:1px;height:16px;background:#ACA899;"></div>
<div style="left:623px;top:725px;width:1px;height:16px;background:#fff;"></div>
<div style="left:703px;top:725px;width:1px;height:16px;background:#ACA899;"></div>
<div style="left:704px;top:725px;width:1px;height:16px;background:#fff;"></div>
<div style="left:786px;top:725px;width:1px;height:16px;background:#ACA899;"></div>
<div style="left:787px;top:725px;width:1px;height:16px;background:#fff;"></div>
<div style="left:866px;top:725px;width:1px;height:16px;background:#ACA899;"></div>
<div style="left:867px;top:725px;width:1px;height:16px;background:#fff;"></div>
<div style="left:872px;top:737px;width:2px;height:2px;background:#00264A;"></div>
<div style="left:872px;top:727px;width:2px;height:9px;background:#4A6A00;"></div>
<div style="left:875px;top:736px;width:2px;height:3px;background:#00264A;"></div>
<div style="left:875px;top:727px;width:2px;height:8px;background:#4A6A00;"></div>
<div style="left:878px;top:735px;width:2px;height:4px;background:#00264A;"></div>
<div style="left:878px;top:727px;width:2px;height:7px;background:#4A6A00;"></div>
<div style="left:881px;top:734px;width:2px;height:5px;background:#00264A;"></div>
<div style="left:881px;top:727px;width:2px;height:6px;background:#4A6A00;"></div>
<div style="left:884px;top:733px;width:2px;height:6px;background:#00264A;"></div>
<div style="left:884px;top:727px;width:2px;height:5px;background:#4A6A00;"></div>
<div style="left:887px;top:732px;width:2px;height:7px;background:#00264A;"></div>
<div style="left:887px;top:727px;width:2px;height:4px;background:#4A6A00;"></div>
<div style="left:890px;top:731px;width:2px;height:8px;background:#00264A;"></div>
<div style="left:890px;top:727px;width:2px;height:3px;background:#4A6A00;"></div>
<div style="left:893px;top:730px;width:2px;height:9px;background:#00264A;"></div>
<div style="left:893px;top:727px;width:2px;height:2px;background:#4A6A00;"></div>
<span style="left:921px;top:728px;">505/3 kb</span>
<svg style="left:1012px;top:727px" width="15" height="14"><path d="M14 1L1 14M14 5L5 14M14 9L9 14" stroke="#fff" stroke-width="1.2"/><path d="M14 2.5L2.5 14M14 6.5L6.5 14M14 10.5L10.5 14" stroke="#ACA899" stroke-width="1.2"/></svg>
</body></html>
